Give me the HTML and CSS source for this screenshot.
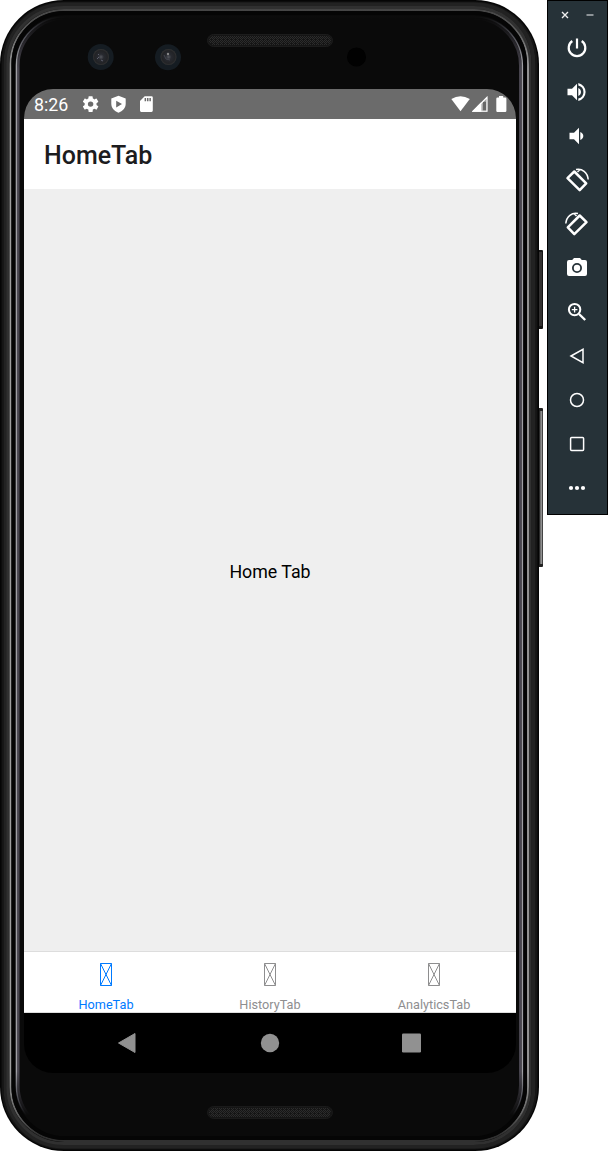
FILE: index.html
```html
<!DOCTYPE html>
<html lang="en">
<head>
<meta charset="utf-8">
<title>HomeTab</title>
<link rel="stylesheet" href="styles.css">
</head>
<body>
<main class="emulator">
  <section class="phone">
    <svg class="frame" width="544" height="1152" viewBox="0 0 544 1152" fill="none">
      <defs>
        <linearGradient id="rim" x1="0" y1="0" x2="0" y2="1152" gradientUnits="userSpaceOnUse">
          <stop offset="0.008" stop-color="#444"/><stop offset="0.025" stop-color="#5a5a5a"/><stop offset="0.06" stop-color="#a0a0a0"/>
          <stop offset="0.93" stop-color="#a0a0a0"/><stop offset="0.965" stop-color="#666"/><stop offset="0.985" stop-color="#303030"/>
        </linearGradient>
        <linearGradient id="glass" x1="0" y1="0" x2="0" y2="1152" gradientUnits="userSpaceOnUse">
          <stop offset="0.014" stop-color="#0a0a0a"/><stop offset="0.03" stop-color="#484850"/><stop offset="0.055" stop-color="#a0a0a5"/>
          <stop offset="0.93" stop-color="#a0a0a5"/><stop offset="0.955" stop-color="#44444c"/><stop offset="0.968" stop-color="#0a0a0a"/>
        </linearGradient>
        <linearGradient id="glow" x1="0" y1="0" x2="0" y2="1152" gradientUnits="userSpaceOnUse">
          <stop offset="0.016" stop-color="#0a0a0a"/><stop offset="0.06" stop-color="#494650"/>
          <stop offset="0.93" stop-color="#494650"/><stop offset="0.968" stop-color="#0a0a0a"/>
        </linearGradient>
        <linearGradient id="key" x1="538" y1="0" x2="543" y2="0" gradientUnits="userSpaceOnUse">
          <stop offset="0" stop-color="#111"/><stop offset="0.4" stop-color="#333"/><stop offset="0.6" stop-color="#aaa"/><stop offset="0.8" stop-color="#777"/><stop offset="1" stop-color="#111"/>
        </linearGradient>
      </defs>
      <rect x="537" y="250" width="6" height="79" rx="1" fill="#151515"/>
      <rect x="539" y="252" width="3" height="74" fill="#343232"/>
      <rect x="537" y="408" width="6" height="159" rx="1" fill="#222"/>
      <rect x="538" y="411" width="5" height="153" fill="url(#key)"/>
      <rect x="0" y="0" width="539" height="1151" rx="64" fill="#050505"/>
      <rect x="2.5" y="2.5" width="534" height="1146" rx="61.5" stroke="#151515" stroke-width="2"/>
      <rect x="5.5" y="4.5" width="528" height="1142" rx="59" stroke="#222" stroke-width="4"/>
      <rect x="8" y="7.5" width="522" height="1136" rx="56" stroke="#303030" stroke-width="3"/>
      <rect x="10.5" y="10" width="517.5" height="1131" rx="54" fill="#0a0a0a" stroke="url(#rim)" stroke-width="1.8"/>
      <rect x="13.5" y="13" width="511.5" height="1125" rx="51" stroke="#050505" stroke-width="4"/>
      <rect x="18.3" y="18" width="502" height="1115" rx="48" fill="#0a0a0a" stroke="url(#glow)" stroke-width="2.5"/>
      <rect x="16.4" y="16.5" width="506" height="1118" rx="49" stroke="url(#glass)" stroke-width="1.4"/>
    </svg>
    <header class="top-bezel">
      <svg width="492" height="89" viewBox="24 0 492 89">
        <defs>
          <pattern id="mesh" width="4" height="4" patternUnits="userSpaceOnUse"><path fill="#2c2c2c" d="M0 0h1v1H0zM2 0h1v1H2zM1 1h1v1H1zM3 1h1v1H3zM0 2h1v1H0zM2 2h1v1H2zM1 3h1v1H1z"/></pattern>
          <radialGradient id="lens"><stop offset="0" stop-color="#55575e"/><stop offset="0.35" stop-color="#282a30"/><stop offset="0.8" stop-color="#222326"/><stop offset="1" stop-color="#333"/></radialGradient>
        </defs>
        <g>
          <circle cx="100.700" cy="57" r="13" fill="#151c22"/><circle cx="101" cy="57" r="8" fill="url(#lens)"/><path d="M98 54l1 1M97 59l2-2M101 60l2 1" stroke="#5c5e6c"/>
          <circle cx="168" cy="57.300" r="13" fill="#151c22"/><circle cx="168.500" cy="57" r="8" fill="url(#lens)"/><circle cx="168" cy="54" r="1.200" fill="#888"/><path d="M164 55l2 4 4 1" stroke="#44464f" fill="none"/>
          <circle cx="356.500" cy="57" r="9.500" fill="#010101"/>
        </g>
        <rect x="207.500" y="34.500" width="125" height="12" rx="6" fill="#151515" stroke="#1c1c1c"/>
        <rect x="209" y="36" width="122" height="9" rx="4.500" fill="url(#mesh)"/>
      </svg>
    </header>
    <div class="screen">
      <div class="status">
        <span class="clock">8:26</span>
        <svg class="notices" width="72" height="20" viewBox="82 94 72 20" fill="#fff">
          <path transform="translate(80.700 94.200) scale(.825)" d="M19.140 12.940c.04-.3.06-.61.06-.94 0-.32-.02-.64-.07-.94l2.030-1.580a.49.49 0 0 0 .12-.61l-1.920-3.320a.49.49 0 0 0-.59-.22l-2.390.96c-.5-.38-1.030-.7-1.620-.94l-.36-2.540A.48.48 0 0 0 13.920 2.400h-3.840c-.24 0-.43.17-.47.41l-.36 2.540c-.59.24-1.130.57-1.620.94l-2.390-.96a.48.48 0 0 0-.59.22L2.740 8.870a.47.47 0 0 0 .12.61l2.030 1.580c-.05.3-.09.63-.09.94s.02.64.07.94l-2.030 1.580a.49.49 0 0 0-.12.61l1.920 3.320c.12.22.37.29.59.22l2.390-.96c.5.38 1.030.7 1.620.94l.36 2.540c.05.24.24.41.48.41h3.840c.24 0 .44-.17.47-.41l.36-2.540c.59-.24 1.130-.56 1.620-.94l2.390.96c.22.08.47 0 .59-.22l1.920-3.320a.48.48 0 0 0-.12-.61zM12 15.300a3.300 3.300 0 1 1 0-6.600 3.300 3.300 0 0 1 0 6.600z"/>
          <path fill-rule="evenodd" d="M118.500 95.800l7.200 2.700v5.300c0 4.200-3 7.600-7.200 8.900-4.200-1.300-7.200-4.700-7.200-8.900v-5.300zM116.200 100.700v6.800l5.800-3.400z"/>
          <path fill-rule="evenodd" d="M144.700 96.300h6.800q1.300 0 1.300 1.300v13q0 1.300-1.300 1.300h-10.200q-1.300 0-1.300-1.300v-9.600zM144.600 97.900v3.400h1.500v-3.400zM147 97.900v3.400h1.500v-3.400zM149.400 97.900v3.400h1.500v-3.400z"/>
        </svg>
        <svg class="signals" width="56" height="20" viewBox="451 94 56 20" fill="#fff">
          <path d="M451.300 99q9.200-5.600 18.500 0l-9.300 12.300z"/>
          <path d="M471.800 111.800L487.500 96v15.800z" fill="#aaa"/><path d="M471.800 111.800l9.600-9.700v9.700z"/><path d="M483 101.800h3v8.800h-3z" fill="#686868"/><path d="M471.800 111.800L487.500 96v15.800z M474.500 110.800h12v-12z" fill-rule="evenodd"/>
          <path d="M499 96h4.200v1.500h2q1.200 0 1.200 1.200v12q0 1.200-1.200 1.200h-7.700q-1.200 0-1.200-1.200v-12q0-1.200 1.200-1.200H499z"/>
        </svg>
      </div>
      <h1 class="title">HomeTab</h1>
      <div class="content">Home Tab</div>
      <nav class="tabs">
        <a class="tab active"><svg width="12" height="24" viewBox="0 0 12 24"><path d="M.5.5h11v22H.5zL11.500 22.500M11.500.5L.5 22.500"/></svg><span>HomeTab</span></a>
        <a class="tab"><svg width="12" height="24" viewBox="0 0 12 24"><path d="M.5.5h11v22H.5zL11.500 22.500M11.500.5L.5 22.500"/></svg><span>HistoryTab</span></a>
        <a class="tab"><svg width="12" height="24" viewBox="0 0 12 24"><path d="M.5.5h11v22H.5zL11.500 22.500M11.500.5L.5 22.500"/></svg><span>AnalyticsTab</span></a>
      </nav>
      <div class="navigation">
        <svg width="492" height="60" viewBox="24 1013 492 60" fill="#919191">
          <path d="M118.500 1043l16.500-9.500v19z" stroke="#919191" stroke-linejoin="round"/><circle cx="270" cy="1043" r="9.200"/><rect x="402" y="1033.500" width="19" height="19" rx="1.300"/>
        </svg>
      </div>
    </div>
    <footer class="bottom-bezel"><svg width="126" height="13"><rect x=".5" y=".5" width="125" height="12" rx="6" fill="#151515" stroke="#1a1a1a"/><rect x="2" y="2" width="122" height="9" rx="4.500" fill="url(#mesh)"/></svg></footer>
  </section>
  <aside class="toolbar">
    <div class="window-controls">
      <svg width="8" height="8" viewBox="0 0 8 8"><path d="M1 1l6 6M7 1L1 7" stroke="#eee" stroke-width="1.400"/></svg>
      <svg width="8" height="8" viewBox="0 0 8 8"><path d="M.5 4h7" stroke="#a0a6a9" stroke-width="1.700"/></svg>
    </div>
    <div class="tools">
      <svg viewBox="0 0 24 24" fill="none" stroke="#fff" stroke-width="2.200"><path d="M12 2.600v10M7.300 5a8.300 8.300 0 1 0 9.400 0"/></svg>
      <svg viewBox="0 0 24 24" fill="#fff"><path d="M2.500 8.700v6.600h4.500l5 5V3.700L7 8.700zM13.300 8v8c1.600-.7 2.700-2.200 2.700-4s-1.100-3.300-2.700-4zM13.300 3v2.400a6.800 6.800 0 0 1 0 13.200V21a9.200 9.200 0 0 0 0-18z"/></svg>
      <svg viewBox="0 0 24 24" fill="#fff"><path d="M4.500 8.700v6.600H9l5 5V3.700L9 8.700zM15.300 8v8c2-.9 3-2.200 3-4s-1-3.100-3-4z"/></svg>
      <svg viewBox="0 0 24 24"><g fill="none" stroke="#fff" stroke-linejoin="round"><path d="M9.300 3.500L2.500 10.200l12.200 12 6.500-6.800z" stroke-width="2.500"/><path d="M11 1.500C17 0 22.600 4.500 23.200 11.500M12.500 4L14.800 1.800" stroke-width="1.500"/></g></svg>
      <svg viewBox="0 0 24 24"><g transform="matrix(-1 0 0 1 24 0)" fill="none" stroke="#fff" stroke-linejoin="round"><path d="M9.300 3.500L2.500 10.200l12.200 12 6.500-6.800z" stroke-width="2.500"/><path d="M11 1.500C17 0 22.600 4.500 23.200 11.500M12.500 4L14.800 1.800" stroke-width="1.500"/></g></svg>
      <svg viewBox="0 0 24 24" fill="#fff"><path fill-rule="evenodd" d="M9 2L7.200 4H4a2 2 0 0 0-2 2v12a2 2 0 0 0 2 2h16a2 2 0 0 0 2-2V6a2 2 0 0 0-2-2h-3.200L15 2zM12 7a5 5 0 1 1 0 10 5 5 0 0 1 0-10z"/><circle cx="12" cy="12" r="3.200"/></svg>
      <svg viewBox="0 0 24 24" fill="none" stroke="#fff"><circle cx="9.600" cy="9.600" r="5.700" stroke-width="2"/><path d="M14 14l6.200 6" stroke-width="2.400"/><path d="M6.800 9.600h5.600M9.600 6.800v5.600" stroke-width="1.300"/></svg>
      <svg viewBox="0 0 24 24" fill="none" stroke="#fff" stroke-width="1.500"><path d="M6 12l12-6.700v13.400z"/></svg>
      <svg viewBox="0 0 24 24" fill="none" stroke="#fff" stroke-width="1.500"><circle cx="12" cy="12" r="6.500"/></svg>
      <svg viewBox="0 0 24 24" fill="none" stroke="#fff" stroke-width="1.500"><rect x="5.600" y="5.600" width="13" height="13" rx="1"/></svg>
      <svg viewBox="0 0 24 24" fill="#fff"><circle cx="6" cy="12" r="2.100"/><circle cx="12" cy="12" r="2.100"/><circle cx="18" cy="12" r="2.100"/></svg>
    </div>
  </aside>
</main>
</body>
</html>
```
FILE: styles.css
```css
* { box-sizing: border-box; }
body { margin: 0; background: #fff; font-family: Roboto, "Noto Sans", sans-serif; }
svg { display: block; flex: none; }
.emulator { display: flex; align-items: flex-start; width: 608px; height: 1152px; }
.phone { position: relative; display: flex; flex-direction: column; align-items: flex-start; width: 547px; height: 1152px; padding-left: 24px; }
.frame { position: absolute; left: 0; top: 0; }
.top-bezel, .screen, .bottom-bezel { position: relative; width: 492px; }
.top-bezel { height: 89px; }
.screen { display: flex; flex-direction: column; height: 984px; overflow: hidden; border-radius: 29px; background: #000; }
.status { display: flex; align-items: center; height: 30px; padding: 0 9px 0 10px; background: #6b6b6b; color: #fff; }
.clock { width: 48px; font-size: 17.8px; line-height: 30px; padding-top: 1px; }
.signals { margin-left: auto; }
.title { height: 70px; margin: 0; padding: 2px 20px 0; background: #fff; color: #1c1c1e; font-size: 25px; font-weight: 500; line-height: 70px; }
.content { display: flex; align-items: center; justify-content: center; height: 762px; padding-top: 2px; background: #efefef; color: #000; font-size: 17.8px; }
.tabs { display: grid; grid-template-columns: repeat(3, 1fr); height: 62px; background: #fff; border-top: 1px solid #ddd; border-bottom: 1px solid #ddd; }
.tab { display: flex; flex-direction: column; align-items: center; padding-top: 11px; gap: 10px; color: #8e8e8f; font-size: 12.7px; line-height: 16px; }
.tab svg { fill: none; stroke: currentColor; stroke-width: 1; }
.active { color: #007aff; }
.navigation { height: 60px; }
.bottom-bezel { display: flex; justify-content: center; padding-top: 33px; }
.toolbar { width: 61px; height: 515px; background: #263238; border: 1px solid #000; }
.window-controls { display: flex; gap: 17px; height: 25px; padding: 10px 0 0 13px; }
.tools { display: flex; flex-direction: column; align-items: flex-start; gap: 20px; padding: 10px 0 0 17px; }
.tools svg { width: 24px; height: 24px; }
```
